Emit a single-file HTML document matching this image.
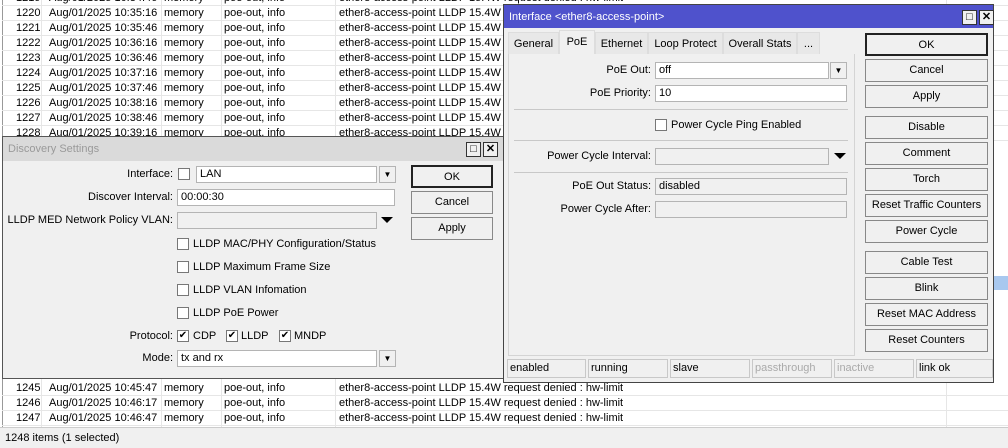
<!DOCTYPE html>
<html><head><meta charset="utf-8"><style>
*{box-sizing:border-box;margin:0;padding:0}
body{width:1008px;height:448px;overflow:hidden;background:#fff;font-family:"Liberation Sans",sans-serif;font-size:11px;color:#000;position:relative}
.a{position:absolute;white-space:nowrap}
.row{position:absolute;left:2px;width:1006px;height:15px;border-bottom:1px solid #e6e6e6;line-height:15px}
.row span{position:absolute;top:0}
.vl{position:absolute;top:0;width:1px;background:#e6e6e6}
.win{position:absolute;background:#f0f0f0;border:1px solid #555}
.lbl{position:absolute;text-align:right;line-height:16px;white-space:nowrap}
.in{position:absolute;background:#fff;border:1px solid #b4b4b4;height:17px;line-height:15px;padding-left:3px;white-space:nowrap}
.dis{background:#f0f0f0}
.dd{position:absolute;width:17px;height:17px;border:1px solid #b4b4b4;background:#f0f0f0;font-size:8px;text-align:center;line-height:15px}
.btn{position:absolute;border:1px solid #888;background:#f0f0f0;text-align:center;line-height:20px;height:23px}
.cb{position:absolute;width:12px;height:12px;border:1px solid #777;background:#fff;font-size:10px;line-height:10px;text-align:center}
.tri{position:absolute;width:0;height:0;border-left:6px solid transparent;border-right:6px solid transparent;border-top:6px solid #000}
.sep{position:absolute;height:1px;background:#c8c8c8}
.tb{position:absolute;width:15px;height:15px;border:1px solid #333;background:#f0f0f0;font-size:11px;line-height:12px;text-align:center;font-weight:bold}
.tab{position:absolute;top:32px;height:23px;background:#e8e8e8;border:1px solid #ddd;line-height:22px;text-align:center}
.st{position:absolute;top:359px;height:19px;border:1px solid #c8c8c8;line-height:17px;padding-left:2px}
</style></head><body>
<div class="vl" style="left:2px;height:430px;background:#999"></div>
<div class="vl" style="left:41px;height:430px"></div>
<div class="vl" style="left:161px;height:430px"></div>
<div class="vl" style="left:221px;height:430px"></div>
<div class="vl" style="left:335px;height:430px"></div>
<div class="vl" style="left:946px;height:430px"></div>
<div id="rows"></div>
<div class="a" style="left:993px;top:276px;width:15px;height:14px;background:#a8c8ef"></div>
<div class="a" style="left:0;top:427px;width:1008px;height:21px;background:#f0f0f0;border-top:1px solid #ccc;line-height:20px;padding-left:5px">1248 items (1 selected)</div>

<!-- Discovery -->
<div class="win" style="left:2px;top:136px;width:502px;height:243px">
<div class="a" style="left:0;top:0;width:500px;height:24px;background:#dadada"></div>
<div class="a" style="left:5px;top:6px;color:#9a9a9a">Discovery Settings</div>
<div class="tb" style="left:463px;top:5px">□</div><div class="tb" style="left:480px;top:5px">✕</div>
</div>
<div class="lbl" style="right:835px;top:166px">Interface:</div>
<div class="cb" style="left:178px;top:168px"></div>
<div class="in" style="left:196px;top:166px;width:181px">LAN</div>
<div class="dd" style="left:379px;top:166px">▼</div>
<div class="lbl" style="right:835px;top:189px">Discover Interval:</div>
<div class="in" style="left:177px;top:189px;width:218px">00:00:30</div>
<div class="lbl" style="right:835px;top:212px">LLDP MED Network Policy VLAN:</div>
<div class="in dis" style="left:177px;top:212px;width:200px"></div>
<div class="tri" style="left:381px;top:217px"></div>
<div class="btn" style="left:411px;top:165px;width:82px;border:2px solid #222">OK</div>
<div class="btn" style="left:411px;top:191px;width:82px">Cancel</div>
<div class="btn" style="left:411px;top:217px;width:82px">Apply</div>
<div class="cb" style="left:177px;top:238px"></div><div class="a" style="left:193px;top:238px">LLDP MAC/PHY Configuration/Status</div>
<div class="cb" style="left:177px;top:261px"></div><div class="a" style="left:193px;top:261px">LLDP Maximum Frame Size</div>
<div class="cb" style="left:177px;top:284px"></div><div class="a" style="left:193px;top:284px">LLDP VLAN Infomation</div>
<div class="cb" style="left:177px;top:307px"></div><div class="a" style="left:193px;top:307px">LLDP PoE Power</div>
<div class="lbl" style="right:835px;top:328px">Protocol:</div>
<div class="cb" style="left:177px;top:330px">✔</div><div class="a" style="left:193px;top:330px">CDP</div>
<div class="cb" style="left:226px;top:330px">✔</div><div class="a" style="left:241px;top:330px">LLDP</div>
<div class="cb" style="left:279px;top:330px">✔</div><div class="a" style="left:294px;top:330px">MNDP</div>
<div class="lbl" style="right:835px;top:350px">Mode:</div>
<div class="in" style="left:177px;top:350px;width:200px">tx and rx</div>
<div class="dd" style="left:379px;top:350px">▼</div>

<!-- Interface -->
<div class="win" style="left:503px;top:4px;width:491px;height:379px;border-color:#444">
<div class="a" style="left:0;top:0;width:489px;height:23px;background:#4f52cc"></div>
<div class="a" style="left:5px;top:6px;color:#fff">Interface &lt;ether8-access-point&gt;</div>
<div class="tb" style="left:458px;top:5px">□</div><div class="tb" style="left:475px;top:5px">✕</div>
</div>
<div class="tab" style="left:508px;width:51px">General</div>
<div class="tab" style="left:559px;top:30px;width:36px;height:25px;background:#f0f0f0;border-bottom:none">PoE</div>
<div class="tab" style="left:595px;width:53px">Ethernet</div>
<div class="tab" style="left:648px;width:75px">Loop Protect</div>
<div class="tab" style="left:723px;width:74px">Overall Stats</div>
<div class="tab" style="left:797px;width:23px">...</div>
<div class="a" style="left:508px;top:54px;width:347px;height:302px;border:1px solid #d4d4d4;border-top:none;background:#f0f0f0"></div>
<div class="lbl" style="right:357px;top:62px">PoE Out:</div>
<div class="in" style="left:655px;top:62px;width:174px">off</div>
<div class="dd" style="left:830px;top:62px">▼</div>
<div class="lbl" style="right:357px;top:85px">PoE Priority:</div>
<div class="in" style="left:655px;top:85px;width:192px">10</div>
<div class="sep" style="left:514px;top:109px;width:334px"></div>
<div class="cb" style="left:655px;top:119px"></div><div class="a" style="left:671px;top:119px">Power Cycle Ping Enabled</div>
<div class="sep" style="left:514px;top:140px;width:334px"></div>
<div class="lbl" style="right:357px;top:148px">Power Cycle Interval:</div>
<div class="in dis" style="left:655px;top:148px;width:174px"></div>
<div class="tri" style="left:834px;top:153px"></div>
<div class="sep" style="left:514px;top:172px;width:334px"></div>
<div class="lbl" style="right:357px;top:178px">PoE Out Status:</div>
<div class="in dis" style="left:655px;top:178px;width:192px">disabled</div>
<div class="lbl" style="right:357px;top:201px">Power Cycle After:</div>
<div class="in dis" style="left:655px;top:201px;width:192px"></div>
<div class="btn" style="left:865px;top:33px;width:123px;border:2px solid #222">OK</div>
<div class="btn" style="left:865px;top:59px;width:123px">Cancel</div>
<div class="btn" style="left:865px;top:85px;width:123px">Apply</div>
<div class="btn" style="left:865px;top:116px;width:123px">Disable</div>
<div class="btn" style="left:865px;top:142px;width:123px">Comment</div>
<div class="btn" style="left:865px;top:168px;width:123px">Torch</div>
<div class="btn" style="left:865px;top:194px;width:123px">Reset Traffic Counters</div>
<div class="btn" style="left:865px;top:220px;width:123px">Power Cycle</div>
<div class="btn" style="left:865px;top:251px;width:123px">Cable Test</div>
<div class="btn" style="left:865px;top:277px;width:123px">Blink</div>
<div class="btn" style="left:865px;top:303px;width:123px">Reset MAC Address</div>
<div class="btn" style="left:865px;top:329px;width:123px">Reset Counters</div>
<div class="st" style="left:507px;width:79px">enabled</div>
<div class="st" style="left:588px;width:80px">running</div>
<div class="st" style="left:670px;width:80px">slave</div>
<div class="st" style="left:752px;width:80px;color:#aaa">passthrough</div>
<div class="st" style="left:834px;width:80px;color:#aaa">inactive</div>
<div class="st" style="left:916px;width:77px">link ok</div>
<script>
var h='';function r(n,t,y){h+='<div class="row" style="top:'+y+'px"><span style="left:14px">'+n+'</span><span style="left:47px">Aug/01/2025 '+t+'</span><span style="left:162px">memory</span><span style="left:222px">poe-out, info</span><span style="left:337px">ether8-access-point LLDP 15.4W request denied : hw-limit</span></div>';}
var ts=['10:34:46','10:35:16','10:35:46','10:36:16','10:36:46','10:37:16','10:37:46','10:38:16','10:38:46','10:39:16'];
for(var i=0;i<10;i++)r(1219+i,ts[i],-9+15*i);
r(1245,'10:45:47',381);r(1246,'10:46:17',396);r(1247,'10:46:47',411);
document.getElementById('rows').innerHTML=h;
</script>
</body></html>
